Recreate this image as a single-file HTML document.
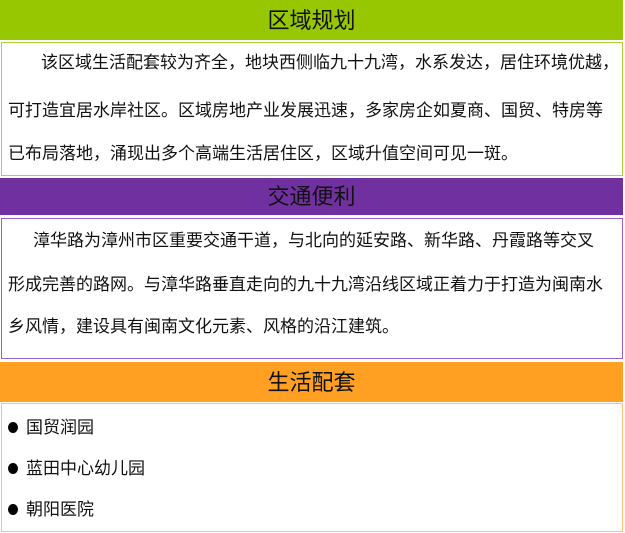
<!DOCTYPE html>
<html><head><meta charset="utf-8"><style>
body{margin:0;width:625px;height:533px;background:#fff;position:relative;overflow:hidden;font-family:"Liberation Sans","Noto Sans CJK SC",sans-serif;color:#111}
.h{position:absolute;left:0;width:623px;text-align:center;font-size:22px;color:#111}
.b{position:absolute;left:1px;width:619px;box-sizing:border-box;border:1px solid}
.l{position:absolute;left:8px;font-size:17px;white-space:nowrap;line-height:20px}
.dot{display:inline-block;width:10px;height:11px;border-radius:50%;background:#000;margin-right:8px;vertical-align:0px}
</style></head><body>
<div class="h" style="top:0;height:40px;line-height:42px;background:#97c700">区域规划</div>
<div class="b" style="top:42px;height:134px;border-color:#a8d43a;width:622px"></div>
<div class="l" style="top:53px;left:41px">该区域生活配套较为齐全，地块西侧临九十九湾，水系发达，居住环境优越，</div>
<div class="l" style="top:101px">可打造宜居水岸社区。区域房地产业发展迅速，多家房企如夏商、国贸、特房等</div>
<div class="l" style="top:144px">已布局落地，涌现出多个高端生活居住区，区域升值空间可见一斑。</div>
<div class="h" style="top:178px;height:37px;line-height:38px;background:#7030a0">交通便利</div>
<div class="b" style="top:218px;height:141px;border-color:#9a60c8;width:622px"></div>
<div class="l" style="top:231px;left:33px">漳华路为漳州市区重要交通干道，与北向的延安路、新华路、丹霞路等交叉</div>
<div class="l" style="top:275px">形成完善的路网。与漳华路垂直走向的九十九湾沿线区域正着力于打造为闽南水</div>
<div class="l" style="top:317px">乡风情，建设具有闽南文化元素、风格的沿江建筑。</div>
<div class="h" style="top:362px;height:40px;line-height:42px;background:#ffa022">生活配套</div>
<div class="b" style="top:403px;height:129px;border-color:#ffc078;width:622px"></div>
<div class="l" style="top:418px"><span class="dot"></span>国贸润园</div>
<div class="l" style="top:459px"><span class="dot"></span>蓝田中心幼儿园</div>
<div class="l" style="top:500px"><span class="dot"></span>朝阳医院</div>
</body></html>
